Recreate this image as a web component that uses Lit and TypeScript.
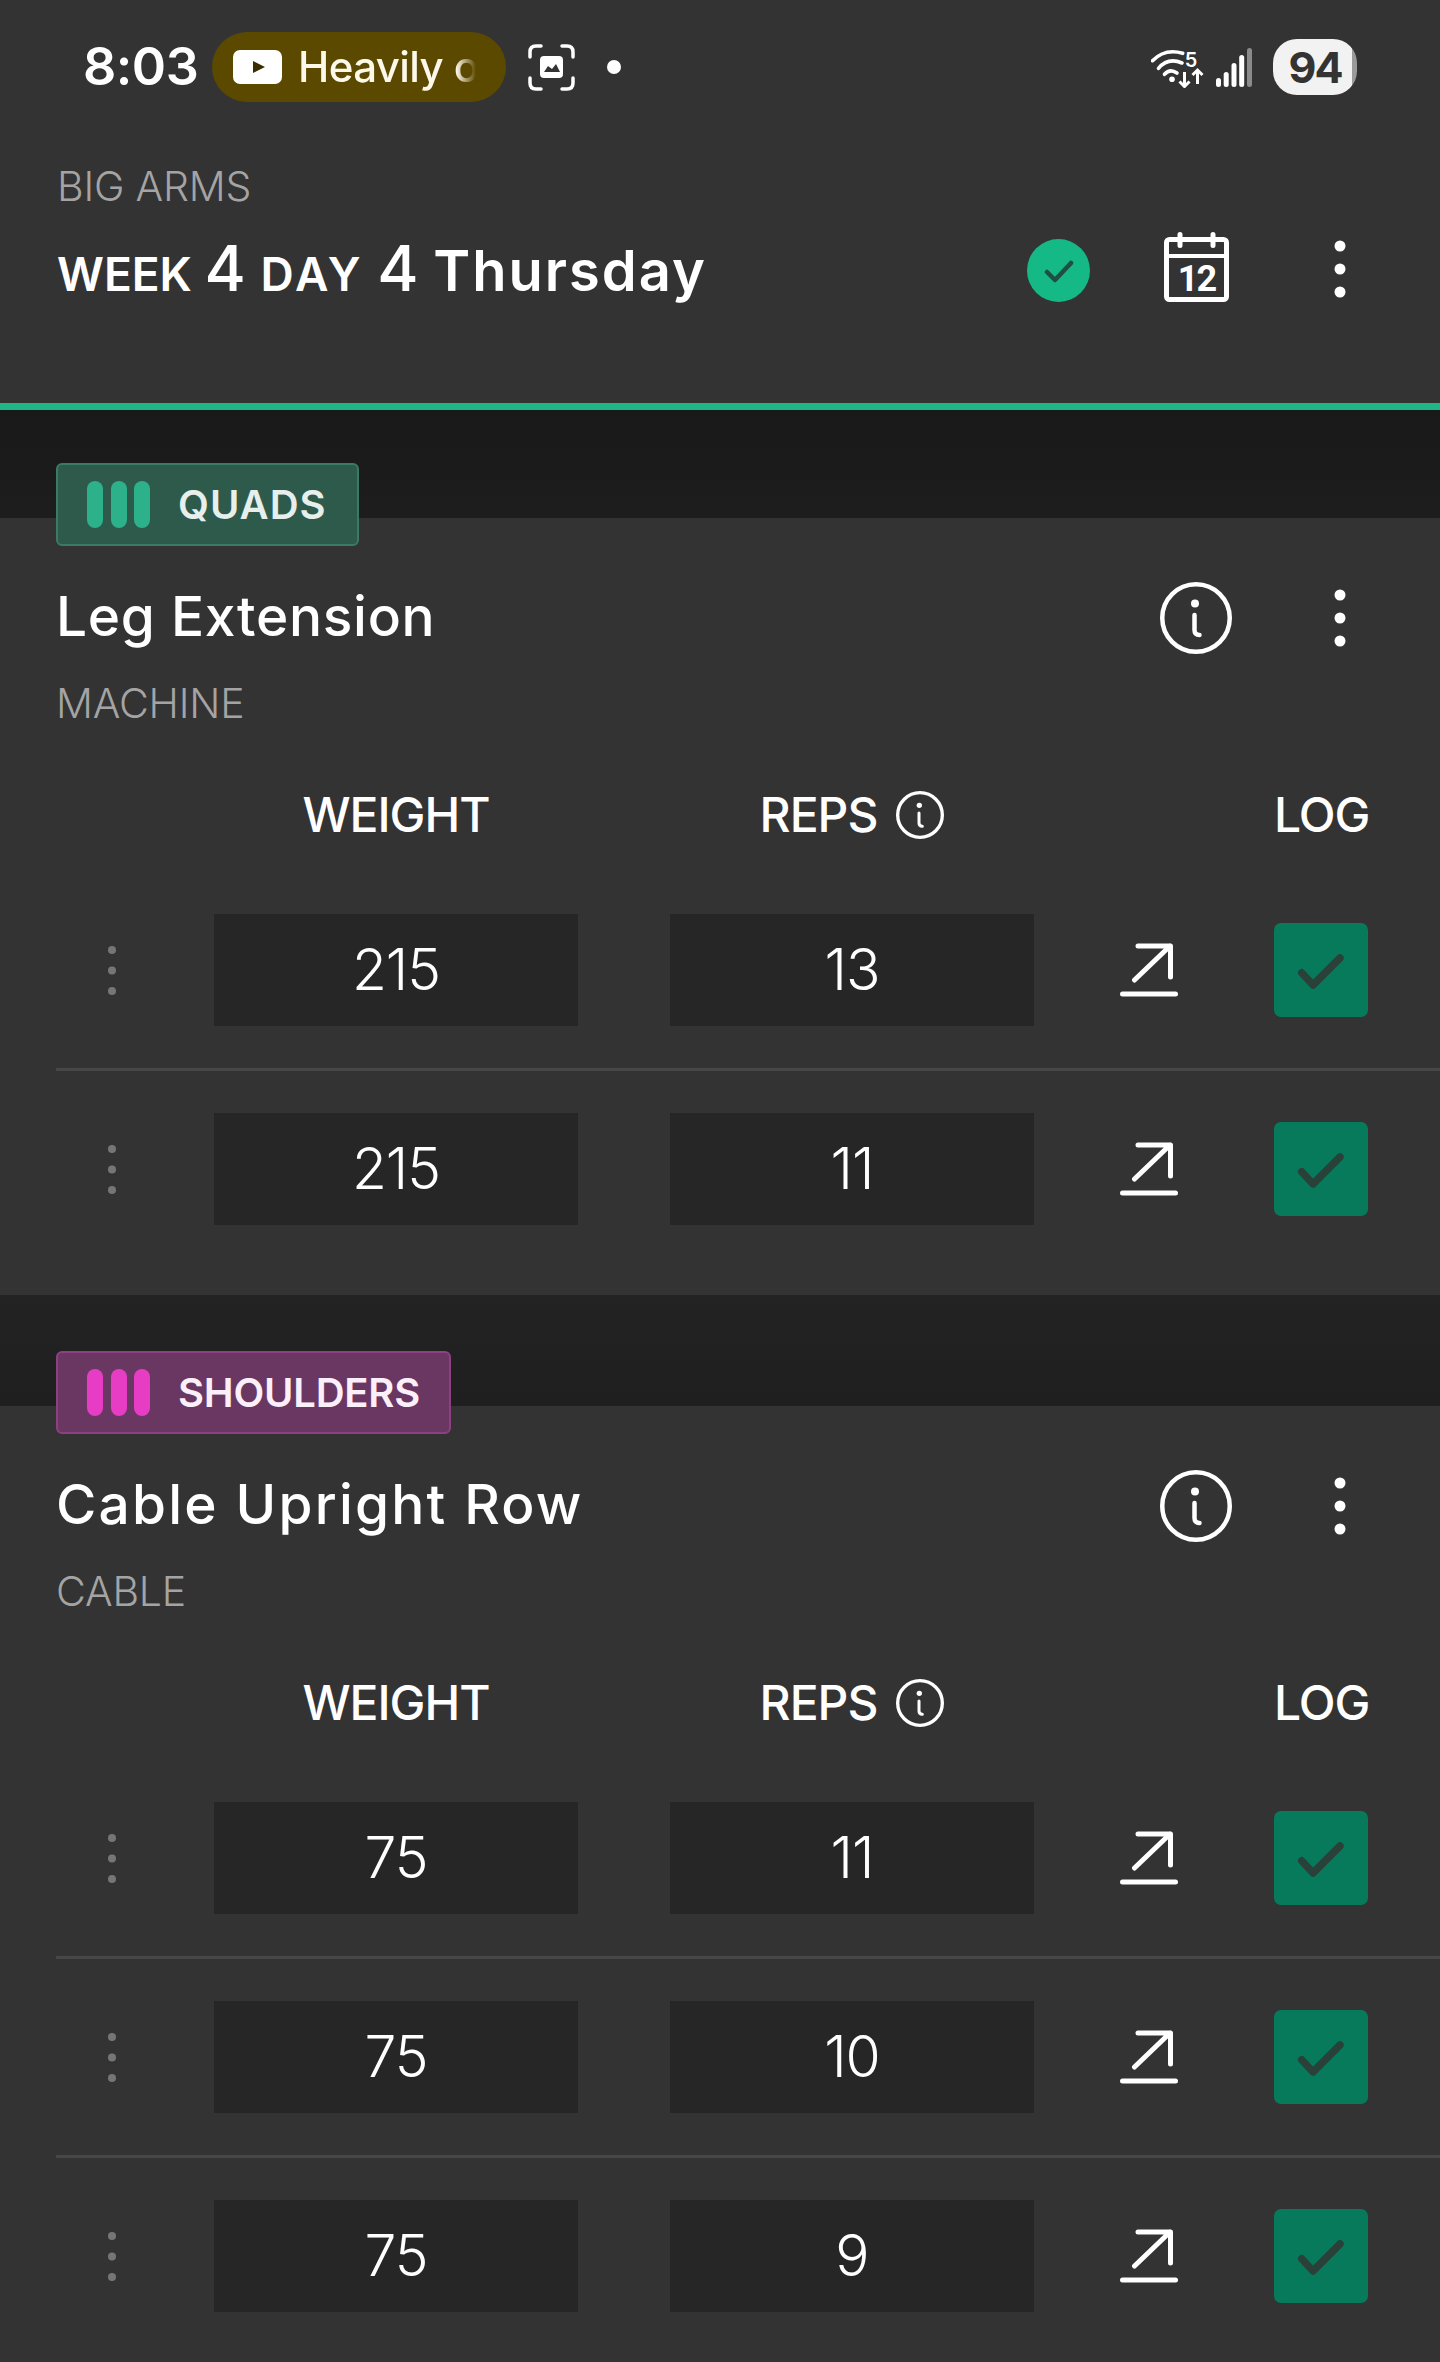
import { LitElement, html, css } from "lit";
import { customElement } from "lit/decorators.js";

const info = (size: number, sw: number) => html`<svg class="ic" width=${size} height=${size} viewBox="0 0 72 72"><circle cx="36" cy="36" r=${36 - sw / 2} fill="none" stroke="#fff" stroke-width=${sw}/><circle cx="35" cy="21.5" r="4" fill="#fff"/><path d="M34.5 33v15q0 5 5 5" fill="none" stroke="#fff" stroke-width="4.5" stroke-linecap="round"/></svg>`;
const dots = (cls = "dots") => html`<svg class=${cls} width="12" height="58" viewBox="0 0 12 58"><circle cx="6" cy="6" r="5.5" fill="#fff"/><circle cx="6" cy="29" r="5.5" fill="#fff"/><circle cx="6" cy="52" r="5.5" fill="#fff"/></svg>`;
const grip = html`<svg width="8" height="49" viewBox="0 0 8 49"><circle cx="4" cy="4" r="4" fill="#767676"/><circle cx="4" cy="24.5" r="4" fill="#767676"/><circle cx="4" cy="45" r="4" fill="#767676"/></svg>`;
const arrow = html`<svg width="58" height="54" viewBox="0 0 58 54"><path d="M18 3h32.5v31M50 3 14.5 37" fill="none" stroke="#fff" stroke-width="5" stroke-linecap="round" stroke-linejoin="round"/><path d="M2.5 51h53" stroke="#fff" stroke-width="5" stroke-linecap="round"/></svg>`;
const check = html`<svg width="50" height="40" viewBox="0 0 50 40"><path d="M5.700 22.700 17 35 44 8" fill="none" stroke="#2a413a" stroke-width="7.500" stroke-linecap="round" stroke-linejoin="round"/></svg>`;

type Ex = { tag: string; cls: string; name: string; kind: string; sets: [string, string][] };
const exercises: Ex[] = [
  { tag: "QUADS", cls: "green", name: "Leg Extension", kind: "MACHINE", sets: [["215", "13"], ["215", "11"]] },
  { tag: "SHOULDERS", cls: "pink", name: "Cable Upright Row", kind: "CABLE", sets: [["75", "11"], ["75", "10"], ["75", "9"]] },
];

@customElement("app-root")
export class AppRoot extends LitElement {
  static styles = css`
    :host { display: block; width: 1440px; height: 2362px; overflow: hidden; background: #333; color: #fff; font-family: "Inter", "Noto Sans", sans-serif; }
    svg { display: block; flex: none; }
    .status { height: 134px; box-sizing: border-box; padding: 32px 83px 0 83px; display: flex; align-items: flex-start; }
    .time { font-weight: 600; font-size: 52px; line-height: 70px; width: 129px; letter-spacing: -0.5px; }
    .pill { width: 294px; height: 70px; border-radius: 35px; background: #5c4900; display: flex; align-items: center; padding-left: 21px; box-sizing: border-box; font-weight: 500; font-size: 42px; line-height: 70px; color: #fdf9ea; letter-spacing: -0.6px; }
    .pill span { margin-left: 16px; white-space: nowrap; -webkit-mask-image: linear-gradient(90deg, #000 158px, transparent 178px); mask-image: linear-gradient(90deg, #000 158px, transparent 178px); }
    .shot { margin: 12px 0 0 22px; }
    .dot { width: 14px; height: 14px; border-radius: 50%; background: #fff; margin: 28px 0 0 32px; }
    .sright { margin-left: auto; display: flex; align-items: flex-start; }
    .wifi { margin: 16px 0 0 0; }
    .signal { margin: 16px 0 0 12px; }
    .batt { margin: 7px 0 0 21px; width: 84px; height: 56px; border-radius: 24px; background: linear-gradient(90deg, #f2f2f2 94%, #9a9a9a 94%); color: #333; font-weight: 700; font-size: 43px; line-height: 56px; letter-spacing: -2px; text-align: center; }

    .head { height: 276px; box-sizing: border-box; border-bottom: 7px solid #1fb587; padding: 27px 94px 0 57px; }
    .prog { font-weight: 300; font-size: 41px; line-height: 50px; color: #a4a4a4; letter-spacing: -0.2px; }
    .titlerow { display: flex; align-items: center; margin-top: 22px; height: 72px; }
    .title { flex: 1; font-weight: 600; font-size: 46px; line-height: 72px; white-space: nowrap; padding-top: 4px; }
    .title b { font-weight: 500; font-size: 63px; margin: 0 3px 0 1px; }
    .title b.second { margin-left: 2px; }
    .title .day { letter-spacing: 3px; }
    .title .th { font-size: 56px; letter-spacing: 2px; }
    .ok { width: 63px; height: 63px; border-radius: 50%; background: #14b985; display: flex; align-items: center; justify-content: center; margin-top: 3px; }
    .cal { margin: 0 0 4px 74px; }
    .hd { margin-left: 105px; }

    .gap { height: 108px; background: linear-gradient(#191919, #1d1d1d); }
    .gap.second { height: 111px; background: linear-gradient(#232323, #1f1f1f); }
    .card { display: flow-root; background: #333; padding: 0 0 28px 56px; }
    .tag { position: relative; margin-top: -55px; height: 83px; width: max-content; box-sizing: border-box; border: 2px solid; border-radius: 6px; display: flex; align-items: center; padding: 0 30px 0 29px; font-weight: 600; font-size: 40px; }
    .tag.green { background: #2e5a4c; border-color: #3b7b66; color: #e6efec; letter-spacing: 1px; }
    .tag.pink { background: #6a3762; border-color: #8d4082; color: #fbeffa; letter-spacing: -0.2px; padding-right: 29px; }
    .bars { display: flex; gap: 7.5px; margin-right: 28px; }
    .bars i { width: 16px; height: 47px; border-radius: 8px; }
    .green .bars i { background: #2cb18a; }
    .pink .bars i { background: #e63dc4; }
    .exrow { display: flex; align-items: center; height: 72px; margin-top: 36px; padding-right: 94px; }
    .name { flex: 1; font-weight: 500; font-size: 55px; line-height: 72px; letter-spacing: 0.700px; padding-bottom: 4px; }
    .name.pink { letter-spacing: 2.200px; }
    .exrow .dots { margin-left: 102px; }
    .kind { font-weight: 300; font-size: 41px; line-height: 50px; color: #a4a4a4; margin-top: 24px; letter-spacing: -0.2px; }
    .cols, .set { display: grid; grid-template-columns: 158px 364px 92px 364px 1fr 94px; padding-right: 72px; }
    .cols { height: 48px; margin-top: 63px; align-items: center; font-size: 48px; font-weight: 500; line-height: 48px; letter-spacing: -1px; }
    .cols .w { grid-column: 2; text-align: center; }
    .cols .r { grid-column: 4; display: flex; justify-content: center; gap: 19px; align-items: center; }
    .cols .l { grid-column: 6; text-align: center; white-space: nowrap; }
    .sets { margin-top: 33px; }
    .set { height: 199px; align-items: center; box-sizing: border-box; border-bottom: 3px solid #474747; }
    .set:last-child { border-bottom: 0; height: 196px; }
    .grip { padding-left: 52px; }
    .val { height: 112px; box-sizing: border-box; padding-bottom: 2px; background: #262626; display: flex; align-items: center; justify-content: center; font-size: 57px; font-weight: 300; letter-spacing: -1px; color: #fff; }
    .val.b { grid-column: 4; }
    .arr { justify-self: center; margin-left: -10px; }
    .logbtn { width: 94px; height: 94px; border-radius: 7px; background: #077a5c; display: flex; align-items: center; justify-content: center; }
  `;

  render() {
    return html`
      <div class="status">
        <div class="time">8:03</div>
        <div class="pill">
          <svg width="49" height="34" viewBox="0 0 49 34"><rect width="49" height="34" rx="7" fill="#fff"/><path d="M20 11l12 6-12 6z" fill="#3a2e00"/></svg>
          <span>Heavily o</span>
        </div>
        <svg class="shot" width="47" height="47" viewBox="0 0 47 47"><path d="M2 13V8q0-6 6-6h5M34 2h5q6 0 6 6v5M2 34v5q0 6 6 6h5M34 45h5q6 0 6-6v-5" fill="none" stroke="#fff" stroke-width="3.5" stroke-linecap="round"/><rect x="12" y="12" width="23" height="22" rx="4" fill="#fff"/><path d="M16 28l4-6 4 3 4-5 4 8z" fill="#333"/></svg>
        <div class="dot"></div>
        <div class="sright">
          <svg class="wifi" width="53" height="40" viewBox="0 0 53 40"><g fill="none" stroke="#fff" stroke-width="3.6" stroke-linecap="round"><path d="M1.500 12.700Q14 0 31.700 5.300"/><path d="M7.500 20.300Q17 9 31 15"/><path d="M13.500 26.300Q19 20 26 25"/></g><circle cx="21" cy="31.300" r="2.800" fill="#fff"/><text x="40" y="18.500" text-anchor="middle" font-family="Inter, sans-serif" font-weight="600" font-size="20" fill="#fff">5</text><g fill="none" stroke="#fff" stroke-width="3"><path d="M33.500 24v14M28.500 33.500l5 5 5-5"/><path d="M46.500 36V22M41.500 27l5-5 5 5"/></g></svg>
          <svg class="signal" width="36" height="39" viewBox="0 0 36 39"><g fill="#fff"><rect x="0" y="30" width="5" height="9" rx="2.500"/><rect x="7.700" y="24" width="5" height="15" rx="2.500"/><rect x="15.500" y="15" width="5" height="24" rx="2.500"/><rect x="23.200" y="7" width="5" height="32" rx="2.500"/></g><rect x="31" y="0" width="5" height="39" rx="2.500" fill="#8b8b8b"/></svg>
          <div class="batt">94</div>
        </div>
      </div>
      <div class="head">
        <div class="prog">BIG ARMS</div>
        <div class="titlerow">
          <div class="title">WEEK <b>4</b> <span class="day">DAY</span> <b class="second">4</b> <span class="th">Thursday</span></div>
          <div class="ok"><svg width="30" height="24" viewBox="0 0 30 24"><path d="M3 13l8 8L27 4" fill="none" stroke="#1e4f40" stroke-width="4.500" stroke-linecap="round" stroke-linejoin="round"/></svg></div>
          <svg class="cal" width="65" height="70" viewBox="0 0 65 70"><rect x="2.500" y="7.500" width="60" height="60" rx="3" fill="none" stroke="#fff" stroke-width="5"/><path d="M2 24h61" stroke="#fff" stroke-width="4"/><path d="M16 2.500v11M49 2.500v11" stroke="#fff" stroke-width="5" stroke-linecap="round"/><text x="32.500" y="59" text-anchor="middle" letter-spacing="-2" font-family="Roboto, sans-serif" font-weight="700" font-size="36" fill="#fff">12</text></svg>
          ${dots("dots hd")}
        </div>
      </div>
      ${exercises.map((e, i) => html`
        <div class="gap ${i ? "second" : ""}"></div>
        <div class="card">
          <div class="tag ${e.cls}"><div class="bars"><i></i><i></i><i></i></div>${e.tag}</div>
          <div class="exrow"><div class="name ${e.cls}">${e.name}</div>${info(72, 4.5)}${dots()}</div>
          <div class="kind">${e.kind}</div>
          <div class="cols"><div class="w">WEIGHT</div><div class="r">REPS ${info(48, 5)}</div><div class="l">LOG</div></div>
          <div class="sets">${e.sets.map((s) => html`
            <div class="set">
              <div class="grip">${grip}</div>
              <div class="val">${s[0]}</div>
              <div class="val b">${s[1]}</div>
              <div class="arr">${arrow}</div>
              <div class="logbtn">${check}</div>
            </div>`)}
          </div>
        </div>`)}
    `;
  }
}
